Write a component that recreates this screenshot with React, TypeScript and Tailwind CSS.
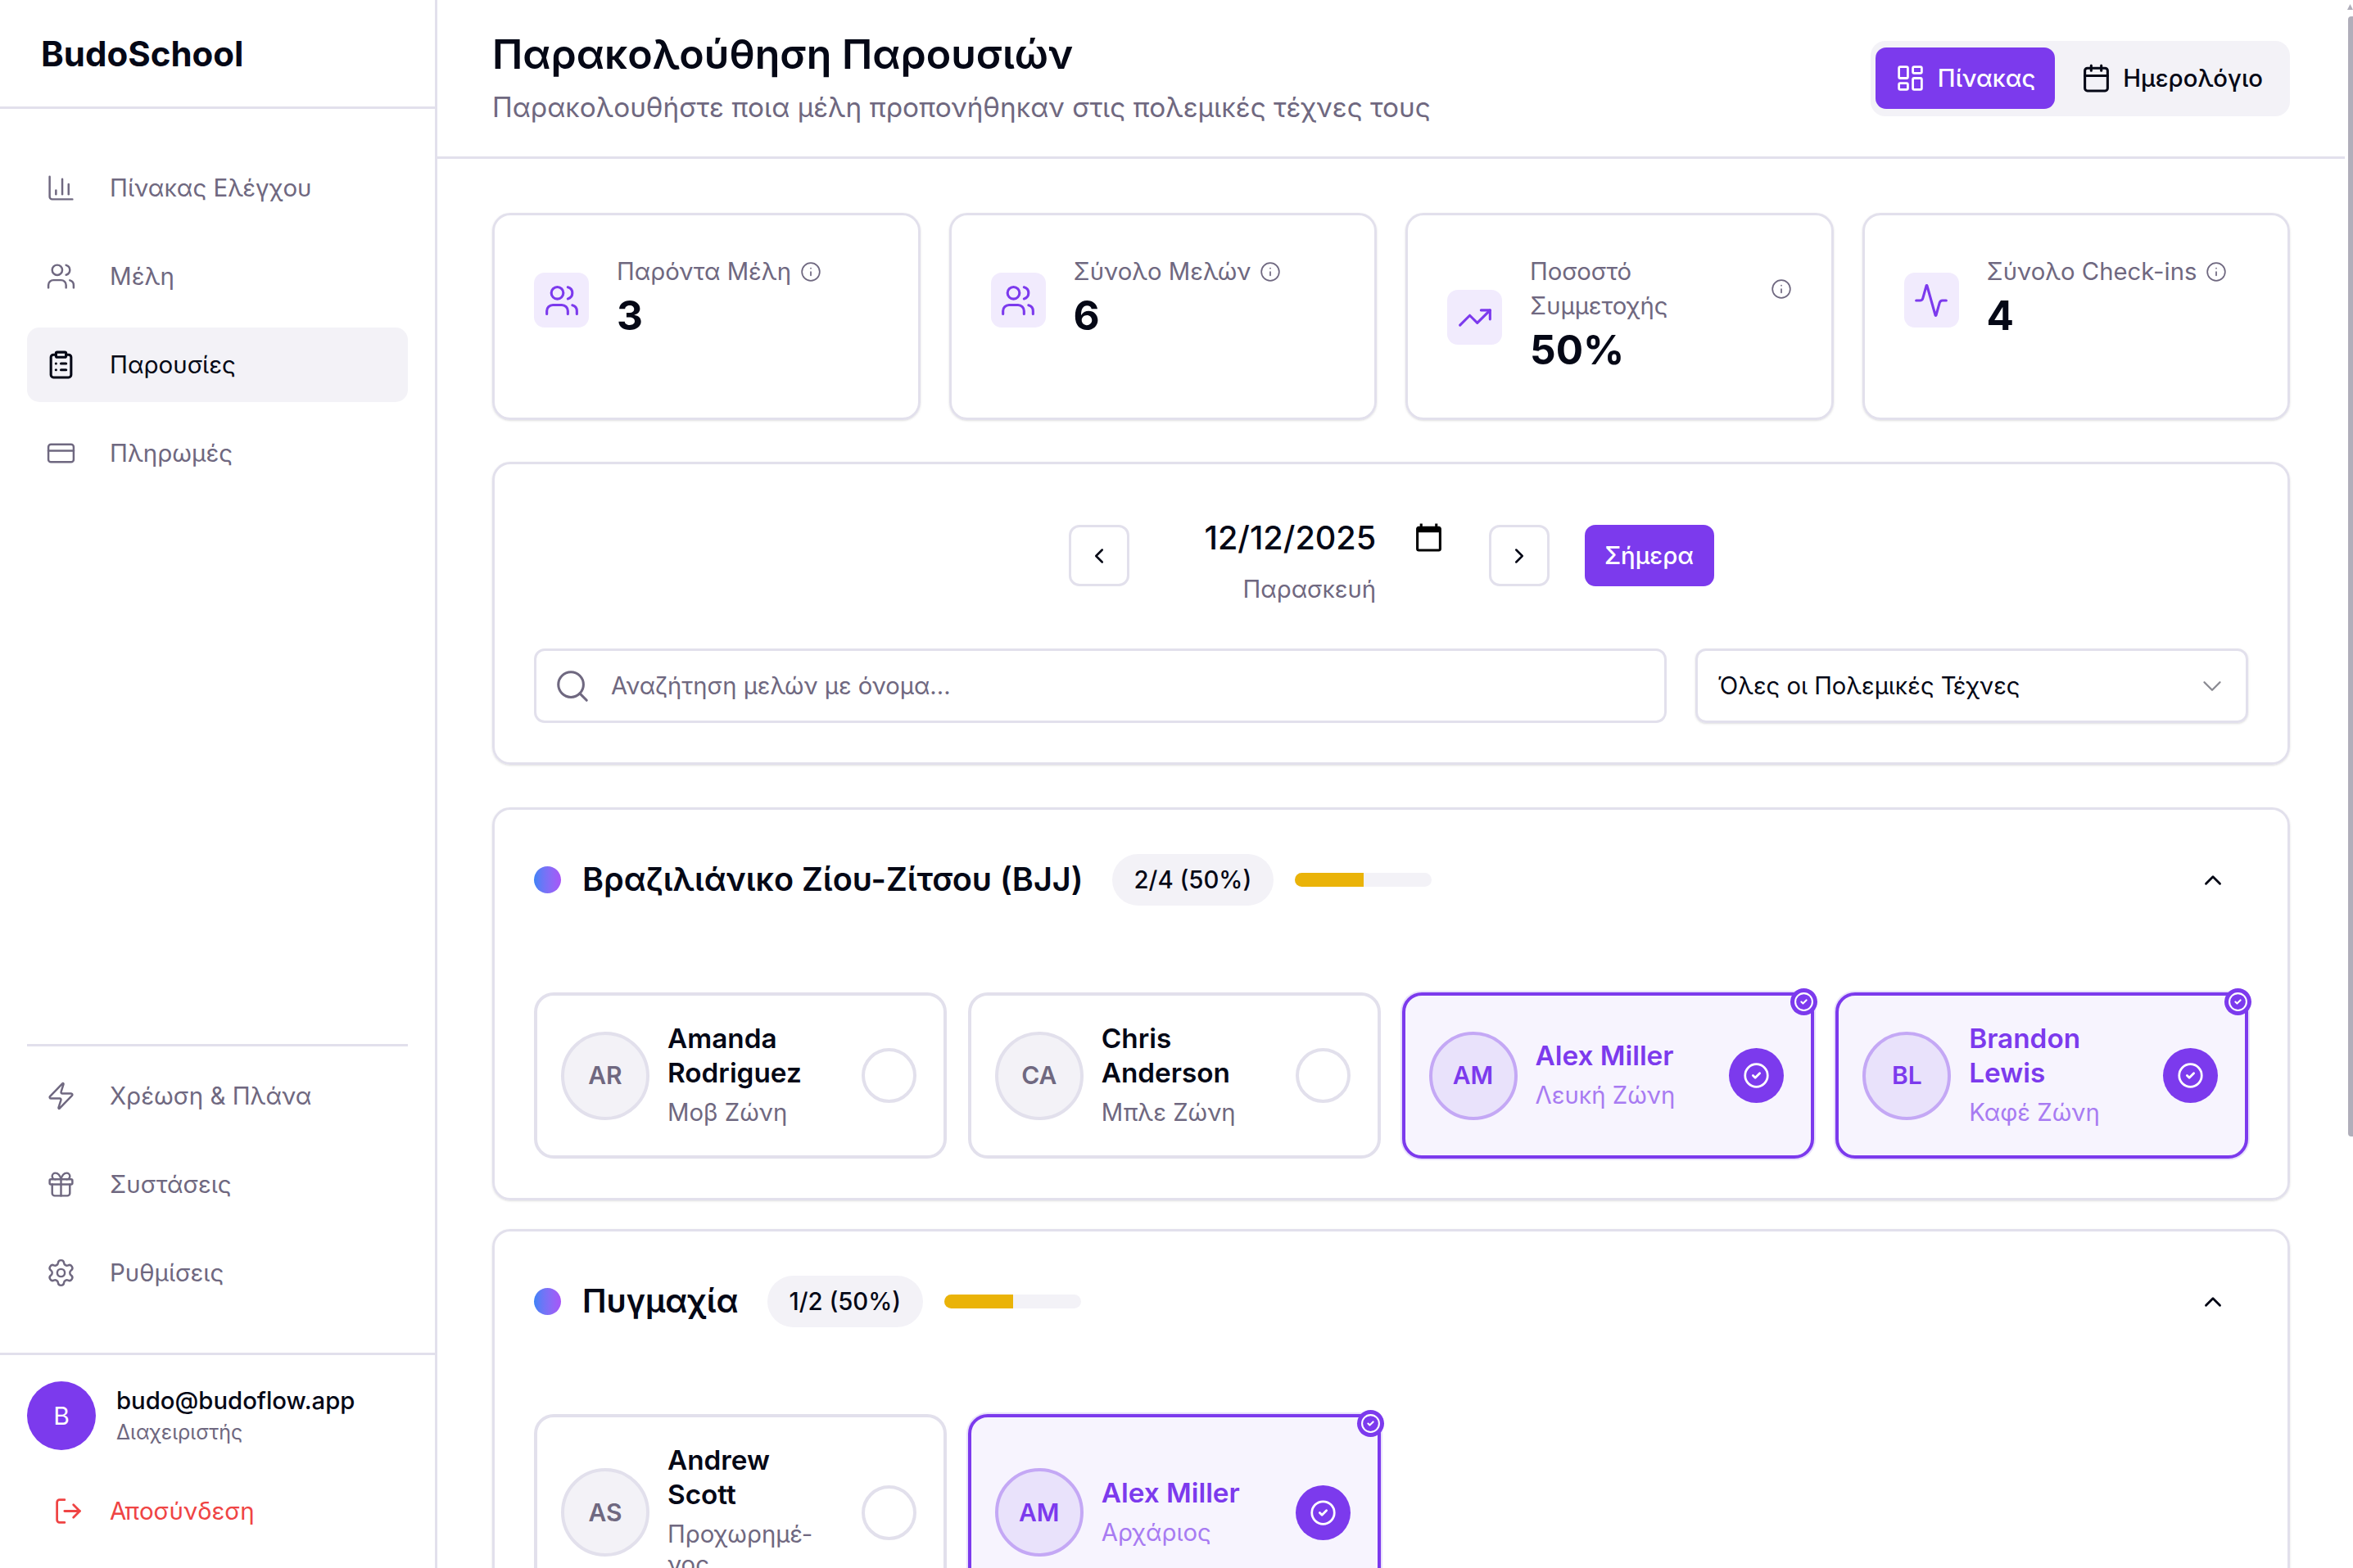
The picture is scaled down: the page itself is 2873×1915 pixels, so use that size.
import { Info, ChartColumn, Users, ClipboardList, CreditCard, Zap, Gift, Settings, LogOut, LayoutDashboard, Calendar, TrendingUp, Activity, ChevronLeft, ChevronRight, ChevronUp, ChevronDown, Search, CircleCheck } from 'lucide-react';
import type { LucideIcon } from 'lucide-react';

type Member = { initials: string; name: string; rank: string; present?: boolean };

const topNav: { label: string; icon: LucideIcon; active?: boolean }[] = [
    { label: 'Πίνακας Ελέγχου', icon: ChartColumn },
    { label: 'Μέλη', icon: Users },
    { label: 'Παρουσίες', icon: ClipboardList, active: true },
    { label: 'Πληρωμές', icon: CreditCard },
];

const bottomNav: { label: string; icon: LucideIcon }[] = [
    { label: 'Χρέωση & Πλάνα', icon: Zap },
    { label: 'Συστάσεις', icon: Gift },
    { label: 'Ρυθμίσεις', icon: Settings },
];

const bjj: Member[] = [
    { initials: 'AR', name: 'Amanda Rodriguez', rank: 'Μοβ Ζώνη' },
    { initials: 'CA', name: 'Chris Anderson', rank: 'Μπλε Ζώνη' },
    { initials: 'AM', name: 'Alex Miller', rank: 'Λευκή Ζώνη', present: true },
    { initials: 'BL', name: 'Brandon Lewis', rank: 'Καφέ Ζώνη', present: true },
];

const boxing: Member[] = [
    { initials: 'AS', name: 'Andrew Scott', rank: 'Προχωρημέ\u00ADνος' },
    { initials: 'AM', name: 'Alex Miller', rank: 'Αρχάριος', present: true },
];

const NavItem = ({ label, icon: Icon, active }: { label: string; icon: LucideIcon; active?: boolean }) => (
    <div className={`flex h-[91px] items-center gap-[41px] rounded-[15px] pl-[23px] text-[29.5px] ${active ? 'bg-[#f3f2f7] text-[#050816]' : 'text-[#6f6880]'}`}>
        <Icon size={37} strokeWidth={active ? 2 : 1.6} />
        <span>{label}</span>
    </div>
);

const Stat = ({ icon: Icon, label, value, wrap }: { icon: LucideIcon; label: string; value: string; wrap?: boolean }) => (
    <div className="flex h-[253px] flex-1 items-start rounded-[22px] border-[3px] border-[#e2e0ec] pl-[48px] pr-[48px] shadow-sm">
        <div className={`flex h-[67px] w-[67px] shrink-0 items-center justify-center rounded-[13px] bg-[#f1ebfd] text-[#7c3aed] ${wrap ? 'mt-[91px]' : 'mt-[70px]'}`}>
            <Icon size={44} strokeWidth={1.7} />
        </div>
        <div className="ml-[34px] flex min-w-0 flex-1 flex-col pt-[48px]">
            <div className="flex items-center gap-[11px] text-[29.3px] leading-[42px] text-[#6f6880]">
                <span className={wrap ? 'w-[190px]' : ''}>{label}</span>
                <Info size={26} strokeWidth={1.6} className={wrap ? 'ml-auto' : ''} />
            </div>
            <div className="text-[49.5px] font-bold leading-[64px] text-[#050816]">{value}</div>
        </div>
    </div>
);

const MemberCard = ({ member, tall }: { member: Member; tall?: boolean }) => (
    <div className={`relative flex items-center rounded-[24px] border-[4px] pl-[29px] pr-[33px] ${tall ? 'h-[240px]' : 'h-[203px]'} ${member.present ? 'border-[#7c3aed] bg-[#f7f4fe] shadow-[0_0_0_2px_#e9e2fb]' : 'border-[#e2e0ec] bg-white'}`}>
        <div className={`flex h-[108px] w-[108px] shrink-0 items-center justify-center rounded-full border-[4px] text-[30px] font-semibold ${member.present ? 'border-[#c4a8f5] bg-[#e9e2fb] text-[#7c3aed]' : 'border-[#e2e0ec] bg-[#f3f2f7] text-[#6f6880]'}`}>
            {member.initials}
        </div>
        <div className="ml-[22px] min-w-0 flex-1 pb-[3px]">
            <div className={`text-[33.3px] font-semibold leading-[42px] ${member.present ? 'text-[#7c3aed]' : 'text-[#050816]'}`}>{member.name}</div>
            <div className={`mt-[9px] text-[29.3px] leading-[37px] ${member.present ? 'text-[#a87bf2]' : 'text-[#6f6880]'}`}>{member.rank}</div>
        </div>
        {member.present ? (
            <div className="ml-[22px] flex h-[67px] w-[67px] shrink-0 items-center justify-center rounded-full bg-[#7c3aed] text-white">
                <CircleCheck size={33} strokeWidth={2} />
            </div>
        ) : (
            <div className="ml-[22px] h-[67px] w-[67px] shrink-0 rounded-full border-[4px] border-[#e2e0ec]" />
        )}
        {member.present && (
            <div className="absolute right-[-8px] top-[-9px] flex h-[33px] w-[33px] items-center justify-center rounded-full bg-[#7c3aed] text-white">
                <CircleCheck size={25} strokeWidth={2} />
            </div>
        )}
    </div>
);

const Group = ({ title, count, members, tall }: { title: string; count: string; members: Member[]; tall?: boolean }) => (
    <section className="shrink-0 rounded-[22px] border-[3px] border-[#e2e0ec] px-[48px] pb-[48px] pt-[54px] shadow-sm">
        <div className="flex h-[63px] items-center">
            <div className="h-[33px] w-[33px] rounded-full bg-gradient-to-r from-[#3b82f6] to-[#a855f7]" />
            <h2 className="ml-[26px] text-[39.6px] font-semibold leading-[63px] text-[#050816]">{title}</h2>
            <div className="ml-[35px] flex h-[63px] items-center rounded-full bg-[#f3f2f7] px-[27px] text-[29.3px] font-medium text-[#050816]">{count}</div>
            <div className="ml-[26px] h-[17px] w-[167px] overflow-hidden rounded-full bg-[#f3f2f7]">
                <div className="h-full w-1/2 bg-[#eab308]" />
            </div>
            <ChevronUp size={34} strokeWidth={2} className="ml-auto mr-[26px] text-[#050816]" />
        </div>
        <div className="mt-[106px] grid grid-cols-4 gap-[26px]">
            {members.map((m) => (
                <MemberCard key={m.initials + m.rank} member={m} tall={tall} />
            ))}
        </div>
    </section>
);

export default function App() {
    return (
        <div className="relative flex h-screen overflow-hidden bg-white text-[#050816] [font-family:Inter,'Noto_Sans',sans-serif]">
            <aside className="flex w-[534px] shrink-0 flex-col border-r-[3px] border-[#e2e0ec]">
                <div className="flex h-[133px] items-center border-b-[3px] border-[#e2e0ec] pl-[50px] text-[42px] font-bold">BudoSchool</div>
                <nav className="flex flex-1 flex-col gap-[17px] px-[33px] pt-[51px]">
                    {topNav.map((item) => (
                        <NavItem key={item.label} {...item} />
                    ))}
                </nav>
                <div className="mx-[33px] flex flex-col gap-[17px] border-t-[3px] border-[#e2e0ec] pb-[52px] pt-[15px]">
                    {bottomNav.map((item) => (
                        <NavItem key={item.label} {...item} />
                    ))}
                </div>
                <div className="h-[263px] border-t-[3px] border-[#e2e0ec] px-[33px] pt-[32px]">
                    <div className="flex items-center">
                        <div className="flex h-[84px] w-[84px] items-center justify-center rounded-full bg-[#7c3aed] text-[30px] text-white">B</div>
                        <div className="ml-[25px]">
                            <div className="text-[29.3px] font-medium leading-[40px]">budo@budoflow.app</div>
                            <div className="text-[25px] leading-[36px] text-[#6f6880]">Διαχειριστής</div>
                        </div>
                    </div>
                    <div className="mt-[44px] flex h-[60px] items-center pl-[32px] text-[29.5px] text-[#ef4444]">
                        <LogOut size={37} strokeWidth={1.8} />
                        <span className="ml-[32px]">Αποσύνδεση</span>
                    </div>
                </div>
            </aside>

            <main className="flex min-w-0 flex-1 flex-col">
                <header className="flex h-[194px] shrink-0 items-center justify-between border-b-[3px] border-[#e2e0ec] pl-[67px] pr-[77px]">
                    <div>
                        <h1 className="text-[50px] font-semibold leading-[60px]">Παρακολούθηση Παρουσιών</h1>
                        <p className="mt-[10px] text-[33.3px] leading-[50px] text-[#6f6880]">Παρακολουθήστε ποια μέλη προπονήθηκαν στις πολεμικές τέχνες τους</p>
                    </div>
                    <div className="flex h-[92px] items-center rounded-[18px] bg-[#f3f2f7] pl-[6px] pr-[33px]">
                        <div className="flex h-[75px] items-center gap-[15px] rounded-[13px] bg-[#7c3aed] px-[24px] text-[29.3px] font-medium text-white">
                            <LayoutDashboard size={37} strokeWidth={1.8} />
                            Πίνακας
                        </div>
                        <div className="ml-[32px] flex items-center gap-[14px] text-[29.3px] font-medium">
                            <Calendar size={37} strokeWidth={2} />
                            Ημερολόγιο
                        </div>
                    </div>
                </header>

                <div className="flex min-h-0 flex-1 flex-col gap-[35px] overflow-hidden pl-[67px] pr-[77px] pt-[66px]">
                    <div className="flex shrink-0 gap-[35px]">
                        <Stat icon={Users} label="Παρόντα Μέλη" value="3" />
                        <Stat icon={Users} label="Σύνολο Μελών" value="6" />
                        <Stat icon={TrendingUp} label="Ποσοστό Συμμετοχής" value="50%" wrap />
                        <Stat icon={Activity} label="Σύνολο Check-ins" value="4" />
                    </div>

                    <div className="mt-[16px] h-[370px] shrink-0 rounded-[22px] border-[3px] border-[#e2e0ec] px-[48px] pt-[74px] shadow-sm">
                        <div className="flex justify-center">
                            <button className="flex h-[75px] w-[74px] items-center justify-center rounded-[13px] border-[3px] border-[#e2e0ec]">
                                <ChevronLeft size={30} />
                            </button>
                            <div className="ml-[92px] w-[292px]">
                                <div className="mt-[-2px] flex items-center justify-between">
                                    <span className="text-[39.6px] font-medium leading-[36px]">12/12/2025</span>
                                    <svg width="37" height="37" viewBox="0 0 24 24" fill="#000" className="mt-[-2px]">
                                        <path d="M20 3h-1V1h-2v2H7V1H5v2H4c-1.1 0-2 .9-2 2v16c0 1.1.9 2 2 2h16c1.1 0 2-.9 2-2V5c0-1.1-.9-2-2-2zm0 18H4V8h16v13z" />
                                    </svg>
                                </div>
                                <div className="mt-[23px] pl-[47px] text-[29.3px] leading-[44px] text-[#6f6880]">Παρασκευή</div>
                            </div>
                            <button className="ml-[55px] flex h-[75px] w-[74px] items-center justify-center rounded-[13px] border-[3px] border-[#e2e0ec]">
                                <ChevronRight size={30} />
                            </button>
                            <button className="ml-[43px] h-[75px] w-[158px] rounded-[13px] bg-[#7c3aed] text-[29.3px] font-medium text-white">Σήμερα</button>
                        </div>
                        <div className="mt-[50px] flex gap-[35px]">
                            <div className="flex h-[91px] flex-1 items-center rounded-[13px] border-[3px] border-[#e2e0ec] pl-[21px] text-[29.2px] text-[#6f6880]">
                                <Search size={46} strokeWidth={1.6} />
                                <span className="ml-[24px]">Αναζήτηση μελών με όνομα...</span>
                            </div>
                            <div className="flex h-[91px] w-[675px] items-center justify-between rounded-[13px] border-[3px] border-[#e2e0ec] pl-[24px] pr-[22px] text-[29.2px] shadow-sm">
                                Όλες οι Πολεμικές Τέχνες
                                <ChevronDown size={38} strokeWidth={1.5} className="text-[#8a8a92]" />
                            </div>
                        </div>
                    </div>

                    <div className="mt-[17px] flex flex-col gap-[35px]">
                        <Group title="Βραζιλιάνικο Ζίου-Ζίτσου (BJJ)" count="2/4 (50%)" members={bjj} />
                        <Group title="Πυγμαχία" count="1/2 (50%)" members={boxing} tall />
                    </div>
                </div>
            </main>

            <div className="absolute right-0 top-0 h-full w-[10px] bg-white">
                <svg width="7" height="7" viewBox="0 0 7 7" fill="#b0aeba" className="absolute left-[3px] top-[5px]">
                    <polygon points="3.5,0 7,7 0,7" />
                </svg>
                <div className="absolute left-[4px] top-[20px] h-[1368px] w-[6px] rounded-l-[4px] bg-[#b0aeba]" />
            </div>
        </div>
    );
}
